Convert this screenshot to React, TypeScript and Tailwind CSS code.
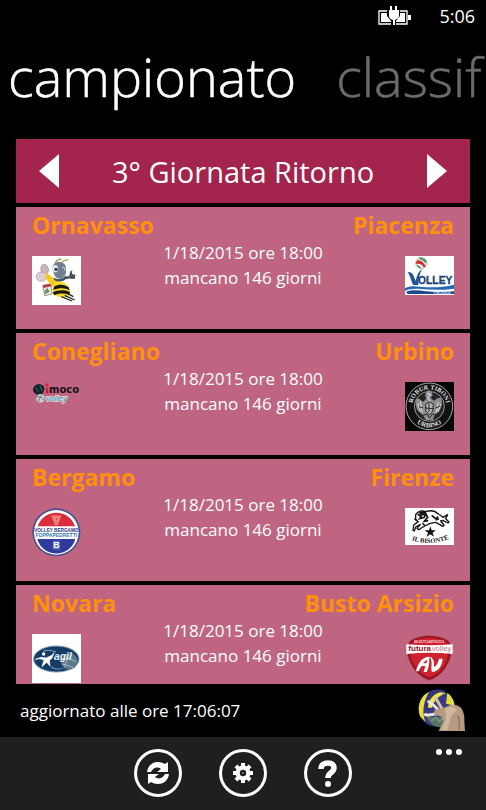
import React, { useState } from 'react';

function LogoOrnavasso() {
    return (
        <svg className="w-[49px]" viewBox="0 0 147 147" role="img" aria-label="Ornavasso">
            <rect width="147" height="147" fill="#ffffff" />
            <ellipse cx="38" cy="40" rx="11" ry="15" fill="#c9b5ba" stroke="#9a868c" strokeWidth="2" transform="rotate(-15 38 40)" />
            <ellipse cx="28" cy="62" rx="16" ry="14" fill="#dccbd0" stroke="#a6959b" strokeWidth="2" />
            <path d="M32 88l25-4 3 30-22 5z" fill="#ece6e2" stroke="#7d6a6a" strokeWidth="2" />
            <path d="M33 88l24-5 1 8-24 5z" fill="#b53a45" />
            <path d="M38 104l8-8 7 11-14 8z" fill="#5d9a62" />
            <path d="M40 52c10 0 14 8 24 14 12 8 22 12 22 20-8 10-26 6-34-4-6-8-14-18-12-30z" fill="#f4c81d" />
            <path d="M72 78c22-6 36 8 40 22 4 12 0 24-14 24-16 2-32-6-36-12-2-14 2-28 10-34z" fill="#f7dc2a" />
            <path d="M66 92c14-8 32-8 44 2l3 9c-14-9-34-8-49-1z" fill="#1b1710" />
            <path d="M62 109c14-8 38-8 52-1l-2 8c-16-5-34-4-45 2z" fill="#1b1710" />
            <path d="M98 118l30 14M88 122l32 13M106 112l18 10" stroke="#2a241c" strokeWidth="4" fill="none" />
            <path d="M62 36c0-14 10-20 22-18 14 2 20 12 18 26 2 12-8 22-18 24-12 2-22-16-22-32z" fill="#6f7f90" />
            <path d="M64 64c10 8 26 8 38-6l3 8c-10 12-26 14-38 6z" fill="#3f5666" />
            <ellipse cx="70" cy="38" rx="8" ry="11" fill="#e8edf2" />
            <circle cx="72" cy="40" r="5" fill="#1f3550" />
            <path d="M90 34c6-2 10 4 8 10" stroke="#b4bfca" strokeWidth="4" fill="none" />
            <path d="M70 20c4-8 10-10 18-11M90 19c6-7 12-8 19-7" stroke="#a39c4c" strokeWidth="4" fill="none" />
            <path d="M98 64c6 2 12 2 18-3" stroke="#46535e" strokeWidth="7" fill="none" />
            <path d="M112 56l4-12 5 1-1 9 10 2-1 12-14 1z" fill="#47535f" />
        </svg>
    );
}

function LogoPiacenza() {
    return (
        <svg className="w-[49px]" viewBox="0 0 147 117" role="img" aria-label="Piacenza">
            <rect width="147" height="117" fill="#ffffff" />
            <circle cx="49" cy="21" r="17" fill="#f4efe8" stroke="#a5a39b" strokeWidth="2" />
            <path d="M35 14c10-4 20 4 27 16l-5 5c-6-10-14-14-24-10z" fill="#d32d2f" />
            <path d="M42 6c8-2 18 2 23 10l-3 6c-5-7-12-12-20-13z" fill="#3c9458" />
            <path d="M35 27c6 0 10 4 14 10-7 0-12-4-14-10z" fill="#3c9458" />
            <path d="M7 48c10 0 17 4 20 14l5 13c3-16 9-29 19-36-7 14-11 30-11 48H24L15 62c-2-5-4-10-8-14z" fill="#1d5596" />
            <text x="39" y="85" fontFamily="Liberation Sans" fontWeight="700" fontSize="31" fill="#1c4278" stroke="#1c4278">OLLEY</text>
            <path d="M0 97c14-8 28-7 45-5 34 4 70 2 102-6v12c-36 5-70 4-100 1-18-2-32 0-47 5z" fill="#2468b0" />
            <path d="M3 107c20-6 40-4 60-1 30 3 58 2 84 0v8H8z" fill="#1b4b8e" />
            <text x="86" y="114" fontFamily="Liberation Sans" fontWeight="700" fontSize="10" fill="#c8dcf2">PIACENZA</text>
        </svg>
    );
}

function LogoConegliano() {
    return (
        <svg className="w-[49px]" viewBox="0 0 147 66" role="img" aria-label="Conegliano">
            <path d="M6 14c4-8 18-10 24-5 8 3 9 14 4 22-2 6-8 9-12 8l-4 12h-6l2-14C4 34-1 22 6 14z" fill="#15242c" />
            <path d="M10 16c6 4 4 10 10 12m4-18c0 8 6 8 6 16" stroke="#41717e" strokeWidth="3" fill="none" />
            <circle cx="25" cy="49" r="13" fill="#c7ccd0" />
            <path d="M14 46c8-4 16 0 21 8M20 60c0-8 4-14 10-20" stroke="#627079" strokeWidth="3" fill="none" />
            <path d="M41 17h8v18h-8z" fill="#c92040" />
            <circle cx="45" cy="9" r="5" fill="#d81f3d" />
            <text x="51" y="33" fontFamily="DejaVu Sans" fontWeight="700" fontSize="30" fill="#171016">moco</text>
            <text x="42" y="58" fontFamily="Liberation Sans" fontStyle="italic" fontWeight="700" fontSize="22" fill="#4f97cf" stroke="#f3ead5" strokeWidth="4" paintOrder="stroke">volley</text>
        </svg>
    );
}

function LogoUrbino() {
    return (
        <svg className="w-[49px]" viewBox="0 0 147 147" role="img" aria-label="Urbino">
            <rect width="147" height="147" fill="#050505" />
            <circle cx="73" cy="73" r="70" fill="#111111" stroke="#a9a9a9" strokeWidth="3" />
            <circle cx="73" cy="73" r="45" fill="#242424" stroke="#989898" strokeWidth="3" />
            <path id="urbino-top" d="M22 73a51 51 0 0 1 102 0" fill="none" />
            <path id="urbino-bottom" d="M10 73a63 63 0 0 0 126 0" fill="none" />
            <text fontFamily="Liberation Serif" fontWeight="700" fontSize="19" fill="#e2e2e2">
                <textPath href="#urbino-top" startOffset="50%" textAnchor="middle">ROBUR TIBONI</textPath>
            </text>
            <text fontFamily="Liberation Serif" fontWeight="700" fontSize="20" fill="#e2e2e2">
                <textPath href="#urbino-bottom" startOffset="50%" textAnchor="middle">URBINO</textPath>
            </text>
            <path d="M64 30l8-6 8 5 3 11-6 8 10 8c8-6 14-10 22-8 4 14 2 28-6 38l-14 14-6 14H62l-8-14-14-12c-8-10-9-24-6-38 8-2 14 4 20 10l10-10-4-10z" fill="#8d8d8d" />
            <path d="M46 58l6 34M38 64l8 24M100 60l-6 32M107 66l-8 24M66 34l10 4-8 10 8 10" stroke="#e2e2e2" strokeWidth="3" fill="none" />
            <path d="M62 66l11-6 12 6-2 22-10 10-10-10z" fill="#b2b2b2" stroke="#2b2b2b" strokeWidth="3" />
            <path d="M54 100l12-4 8 12 8-12 12 4M60 78l26 2M72 64v26M42 74l12 4M92 78l14-6" stroke="#282828" strokeWidth="3" fill="none" />
        </svg>
    );
}

function LogoBergamo() {
    return (
        <svg className="w-[49px]" viewBox="0 0 147 147" role="img" aria-label="Bergamo">
            <circle cx="73" cy="73" r="72" fill="#4b4f92" />
            <circle cx="73" cy="73" r="67" fill="#ffffff" />
            <path d="M17 55a59 59 0 0 1 112 0z" fill="#dc2b3c" />
            <path d="M16 93a59 59 0 0 0 114 0z" fill="#2f3b9c" />
            <path d="M60 24h26l-10 26h-6zM68 30l5 12 5-12z" fill="#e8665a" stroke="#f8c3b3" strokeWidth="2" />
            <text x="73" y="71" textAnchor="middle" fontFamily="Liberation Sans" fontWeight="700" fontSize="14" fill="#27347f">VOLLEY BERGAMO</text>
            <text x="73" y="88" textAnchor="middle" fontFamily="Liberation Sans" fontWeight="700" fontSize="15" fill="#3579a9">FOPPAPEDRETTI</text>
            <rect x="62" y="98" width="22" height="27" fill="#5c6bc0" />
            <text x="73" y="121" textAnchor="middle" fontFamily="Liberation Sans" fontWeight="700" fontSize="26" fill="#ffffff">B</text>
        </svg>
    );
}

function LogoFirenze() {
    return (
        <svg className="w-[49px]" viewBox="0 0 147 111" role="img" aria-label="Firenze">
            <rect width="147" height="111" fill="#ffffff" />
            <path d="M32 20c6-12 20-14 30-9 14-5 28-3 38 7 6 3 10 6 14 10l14-8-6 12 10 10-3 3-16-8-6 2 10 12-3 4-22-12c-12 2-20 2-26 8l-16 8-8 6-6-4 10-12-14 8-4 12-4-2 2-16 14-10-8-6z" fill="#ffffff" stroke="#161616" strokeWidth="4" strokeLinejoin="round" />
            <path d="M38 18l10 8-4 6 14-4 4-12 6 12-10 12 12-2M28 32l8 6M80 22l12 10 8-6M92 36l10-4M52 46l8 6" stroke="#161616" strokeWidth="5" fill="none" />
            <path d="M42 12l14-4 8 5-6 9-12 2z" fill="#161616" />
            <path d="M76 55l4 12h13l-10 7 4 12-11-7-11 7 4-12-10-7h13z" fill="#111111" />
            <path id="bisonte-arco" d="M18 96q58 20 116-4" fill="none" />
            <text fontFamily="Liberation Serif" fontWeight="700" fontSize="20" fill="#161616">
                <textPath href="#bisonte-arco" startOffset="50%" textAnchor="middle">IL BISONTE</textPath>
            </text>
        </svg>
    );
}

function LogoNovara() {
    return (
        <svg className="w-[49px]" viewBox="0 0 147 147" role="img" aria-label="Novara">
            <rect width="147" height="147" fill="#ffffff" />
            <ellipse cx="73" cy="75" rx="68" ry="39" fill="#143c66" stroke="#7d97ad" strokeWidth="3" />
            <circle cx="112" cy="82" r="25" fill="#5b7a8c" />
            <path d="M92 78c12-6 26-4 40 6M98 100c2-16 10-28 22-36M90 90c14 2 26 8 36 12" stroke="#a4b8bf" strokeWidth="3" fill="none" />
            <path d="M10 76l18-6 14 2 18-8 6-8-6 16-8 8 2 16-10-11-14 13 6-20-12-4z" fill="#ffffff" stroke="#ffffff" strokeWidth="2" />
            <circle cx="35" cy="60" r="5" fill="#ffffff" />
            <path d="M34 52c14-6 28-2 38 2" stroke="#90adc5" strokeWidth="3" fill="none" />
            <text x="66" y="77" fontFamily="Liberation Sans" fontStyle="italic" fontWeight="700" fontSize="31" fill="#e6eff5">agil</text>
            <path d="M56 98c12 8 28 8 38 4" stroke="#5c86aa" strokeWidth="4" fill="none" />
        </svg>
    );
}

function LogoBusto() {
    return (
        <svg className="w-[49px]" viewBox="0 0 147 141" role="img" aria-label="Busto Arsizio">
            <path d="M73 4c20 0 46 6 60 18 10 20 8 48-4 68-12 24-32 42-56 50-24-8-44-26-56-50C5 70 3 42 13 22 27 10 53 4 73 4z" fill="#9a1422" stroke="#b4606a" strokeWidth="3" />
            <path d="M73 12c18 0 40 5 52 14 8 18 6 42-4 60-10 22-28 36-48 44-20-8-38-22-48-44-10-18-12-42-4-60 12-9 34-14 52-14z" fill="#cf2231" />
            <text x="73" y="27" textAnchor="middle" fontFamily="Liberation Sans" fontWeight="700" fontSize="12" fill="#f3c7c9">BUSTOARSIZIO</text>
            <path d="M4 31q69 6 139 0v29q-70-8-139 0z" fill="#ffffff" />
            <text x="10" y="52" fontFamily="Liberation Sans" fontWeight="700" fontSize="24" fill="#8f1522">futura</text>
            <text x="80" y="52" fontFamily="Liberation Sans" fontSize="23" fill="#b57076">volley</text>
            <path d="M33 112c6-24 18-44 40-44v8c0 14-2 26-8 38h-9l5-18H51c-4 2-7 8-10 16zM54 88h10l3-11c-5 2-9 6-13 11z" fill="#ffffff" fillRule="evenodd" />
            <path d="M74 68c12 4 14 16 13 30 8-2 12-12 15-24h11c-2 24-14 38-32 40-5-12 4-30-7-46z" fill="#ffffff" />
        </svg>
    );
}

const partite = [
    { id: 1, casa: 'Ornavasso', ospite: 'Piacenza', logoCasa: <LogoOrnavasso />, logoOspite: <LogoPiacenza /> },
    { id: 2, casa: 'Conegliano', ospite: 'Urbino', logoCasa: <LogoConegliano />, logoOspite: <LogoUrbino /> },
    { id: 3, casa: 'Bergamo', ospite: 'Firenze', logoCasa: <LogoBergamo />, logoOspite: <LogoFirenze /> },
    { id: 4, casa: 'Novara', ospite: 'Busto Arsizio', logoCasa: <LogoNovara />, logoOspite: <LogoBusto /> },
];

export default function App() {
    const [giornata, setGiornata] = useState(3);

    return (
        <div className="flex h-screen flex-col overflow-hidden bg-black font-['Open_Sans',sans-serif] text-white">
            {/* Barra di stato */}
            <div className="flex h-8 shrink-0 items-center justify-end gap-7 pr-[11px]">
                <svg className="h-5 w-[33px]" viewBox="0 0 33 20" role="img" aria-label="Batteria in carica">
                    <path d="M1 5h28v13H1z" fill="none" stroke="#ffffff" strokeWidth="1.3" />
                    <path d="M3 7h24v9H3zM30 9h3v5h-3z" fill="#ffffff" />
                    <path d="M11 0h8l3 5v5l-4 5v5h-5v-5l-4-5V5z" fill="#000000" />
                    <path d="M12 0h2v4h3V0h2v4h2v6c0 2-2 3-4 4v5h-2v-5c-3-1-4-2-4-4V4h1z" fill="#ffffff" />
                </svg>
                <span className="text-[18px] leading-6">5:06</span>
            </div>

            {/* Titoli del pivot */}
            <nav className="flex h-[107px] shrink-0 gap-10 overflow-hidden whitespace-nowrap pl-2 pt-1 text-[54px] font-light leading-[80px] [-webkit-text-stroke:0.5px]">
                <button className="h-20 shrink-0">campionato</button>
                <button className="h-20 shrink-0 text-[#6b6b6b]">classif</button>
            </nav>

            <main className="flex min-h-0 flex-1 flex-col gap-1 px-4">
                <div className="flex h-16 shrink-0 items-center justify-between bg-[#a3244d] px-[23px]">
                    <button aria-label="Giornata precedente" onClick={() => setGiornata(Math.max(1, giornata - 1))}>
                        <svg className="h-[34px] w-5" viewBox="0 0 20 34"><path d="M20 0v34L0 17z" fill="#ffffff" /></svg>
                    </button>
                    <h1 className="pt-0.5 text-[29px] leading-10">{giornata}° Giornata Ritorno</h1>
                    <button aria-label="Giornata successiva" onClick={() => setGiornata(giornata + 1)}>
                        <svg className="h-[34px] w-5" viewBox="0 0 20 34"><path d="M0 0v34l20-17z" fill="#ffffff" /></svg>
                    </button>
                </div>

                <div className="flex min-h-0 flex-1 flex-col gap-1 overflow-hidden">
                    {partite.map(p => (
                        <article key={p.id} className="h-[122px] shrink-0 bg-[#bf6582] px-4 pt-[5px]">
                            <div className="flex h-7 justify-between text-[23px] font-bold leading-[26px] text-[#ff900a]">
                                <h2>{p.casa}</h2>
                                <h2>{p.ospite}</h2>
                            </div>
                            <div className="flex items-start justify-between">
                                <div className="mt-4">{p.logoCasa}</div>
                                <p className="text-center text-[17px] leading-[25px]">
                                    1/18/2015 ore 18:00<br />
                                    mancano 146 giorni
                                </p>
                                <div className="mt-4">{p.logoOspite}</div>
                            </div>
                        </article>
                    ))}
                </div>
            </main>

            <div className="flex h-[53px] shrink-0 items-center justify-between pl-5 pr-[21px]">
                <p className="text-[17px] leading-6">aggiornato alle ore 17:06:07</p>
                <svg className="h-[43px] w-[47px]" viewBox="0 0 141 129" role="img" aria-label="Pallavolo">
                    <circle cx="56" cy="58" r="55" fill="#3a3b82" />
                    <path d="M20 17C4 32-2 60 6 82l16 16C12 70 14 40 34 8z" fill="#e8df3e" />
                    <path d="M34 8c16-8 34-8 48-2C58 12 38 32 34 62l-10 4C22 42 24 24 34 8z" fill="#343479" />
                    <path d="M30 56c0-20 14-40 36-46l18 2C62 20 46 36 42 56z" fill="#f0e64c" />
                    <path d="M88 12c12 8 20 22 22 38L84 44z" fill="#e4d93f" />
                    <path d="M24 78c20 12 44 8 60-4v38c-6 2-12 3-20 3-20-3-34-17-40-37z" fill="#587565" />
                    <path d="M40 96l14-12 10 14 10-10" stroke="#7f9a86" strokeWidth="4" fill="none" />
                    <path d="M32 38c10 6 20 14 28 24M22 77c14 2 28 0 42-6" stroke="#e9e4dc" strokeWidth="9" strokeLinecap="round" fill="none" />
                    <path d="M54 28c6 12 14 24 20 36" stroke="#d8c1a8" strokeWidth="9" strokeLinecap="round" fill="none" />
                    <path d="M50 62l28-6 14-6c14-6 30-2 38 8 8 12 10 26 9 40l2 28H62l14-30-6-14-22-4z" fill="#b69b80" />
                    <path d="M82 58l20-6 16 10-18 18-12 44H70l14-34z" fill="#d0b69b" />
                    <path d="M120 80c6 14 4 30 4 44" stroke="#8c745d" strokeWidth="4" fill="none" />
                </svg>
            </div>

            {/* Barra applicazione */}
            <footer className="grid h-[73px] shrink-0 grid-cols-[1fr_auto_1fr] bg-[#1f1f1f]">
                <div className="col-start-2 flex gap-[37px] pt-3">
                    <button className="flex size-12 items-center justify-center rounded-full border-3 border-white" aria-label="Aggiorna">
                        <svg className="size-[26px]" viewBox="0 0 26 26" fill="#ffffff">
                            <path d="M2 12C3 5 8 2 13 2c3 0 5 1 7 2l3-2v10H12l4-3c-4-3-8-1-10 3z" />
                            <path d="M24 14c-1 7-6 10-11 10-3 0-5-1-7-2l-3 2V14h11l-4 3c4 3 8 1 10-3z" />
                        </svg>
                    </button>
                    <button className="flex size-12 items-center justify-center rounded-full border-3 border-white" aria-label="Impostazioni">
                        <svg className="size-5" viewBox="0 0 20 20">
                            <g fill="#ffffff">
                                <circle cx="10" cy="10" r="7.5" />
                                <path d="M8 0h4v20H8z" />
                                <path d="M8 0h4v20H8z" transform="rotate(45 10 10)" />
                                <path d="M8 0h4v20H8z" transform="rotate(90 10 10)" />
                                <path d="M8 0h4v20H8z" transform="rotate(135 10 10)" />
                            </g>
                            <circle cx="10" cy="10" r="3.2" fill="#1f1f1f" />
                            <circle cx="10" cy="10" r="1" fill="#777777" />
                        </svg>
                    </button>
                    <button className="flex size-12 items-center justify-center rounded-full border-3 border-white" aria-label="Aiuto">
                        <svg className="h-[27px] w-5" viewBox="0 0 20 27">
                            <path d="M3 9c0-4 3-6 7-6s6 2 6 5c0 5-6 4-6 10" fill="none" stroke="#ffffff" strokeWidth="5.5" />
                            <circle cx="10" cy="24" r="3" fill="#ffffff" />
                        </svg>
                    </button>
                </div>
                <button className="mr-6 mt-3 flex h-[6px] gap-1 justify-self-end" aria-label="Altro">
                    <span className="size-[6px] rounded-full bg-white" />
                    <span className="size-[6px] rounded-full bg-white" />
                    <span className="size-[6px] rounded-full bg-white" />
                </button>
            </footer>
        </div>
    );
}
